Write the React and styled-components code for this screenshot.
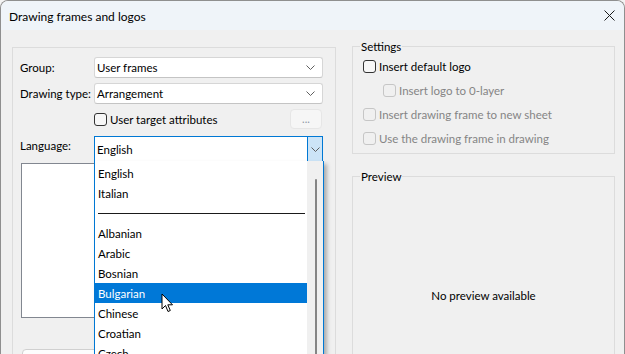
import React from "react";
import styled, { createGlobalStyle } from "styled-components";

const GlobalStyle = createGlobalStyle`
  html, body { margin: 0; padding: 0; width: 625px; height: 354px; overflow: hidden; background: #f3f3f3; }
  body { font-family: Lato, "Noto Sans", sans-serif; font-size: 11.5px; color: #000; white-space: nowrap; }
  * { box-sizing: border-box; }
`;

const Window = styled.div`
  position: relative;
  width: 625px;
  height: 354px;
  border: 1px solid #8f8f8f;
  border-bottom: none;
  border-radius: 8px 8px 0 0;
  overflow: hidden;
  background: #f0f0f0;
  display: flex;
  flex-direction: column;
`;

const TitleBar = styled.div`
  height: 29px;
  flex: none;
  background: #eff4f9;
  display: flex;
  align-items: center;
  justify-content: space-between;
  padding-left: 8px;
`;

const Title = styled.span`
  font-size: 12px;
  line-height: 15px;
  margin-top: 2px;
`;

const CloseButton = styled.div`
  width: 30px;
  height: 29px;
  display: flex;
  align-items: center;
  justify-content: center;
`;

const Body = styled.div`
  flex: 1;
  display: flex;
  align-items: flex-start;
  gap: 16px;
  padding: 9px 8px 0 11px;
`;

const LeftGroup = styled.div`
  position: relative;
  width: 324px;
  height: 340px;
  margin-top: 8px;
  border: 1px solid #dcdcdc;
  padding: 9px 12px 0 7px;
  display: flex;
  flex-direction: column;
`;

const Row = styled.div`
  display: flex;
  align-items: ${(p) => (p.$top ? "flex-start" : "center")};
  margin-top: ${(p) => p.$mt || 0}px;
`;

const Label = styled.div`
  width: 74px;
  flex: none;
  line-height: 15px;
  padding-top: ${(p) => (p.$top ? 3 : 0)}px;
  margin-top: -1px;
`;

const Combo = styled.div`
  position: relative;
  flex: 1;
  height: ${(p) => (p.$focused ? 27 : 21)}px;
  background: #fff;
  border: 1px solid ${(p) => (p.$focused ? "#0078d4" : "#d6d6d6")};
  border-bottom: ${(p) => (p.$focused ? "2px solid #0078d4" : "1px solid #c4c4c4")};
  border-radius: ${(p) => (p.$focused ? "0" : "3px")};
  display: flex;
  align-items: center;
  padding-left: 2px;
`;

const ComboText = styled.span`
  flex: 1;
  line-height: 15px;
  padding-top: ${(p) => (p.$focused ? 1 : 0)}px;
`;

const Arrow = styled.div`
  width: ${(p) => (p.$focused ? 16 : 19)}px;
  align-self: stretch;
  display: flex;
  align-items: center;
  justify-content: center;
  margin-right: ${(p) => (p.$focused ? -1 : 0)}px;
  margin-top: ${(p) => (p.$focused ? -1 : 0)}px;
  margin-bottom: ${(p) => (p.$focused ? -2 : 0)}px;
  background: ${(p) => (p.$focused ? "#cce4f7" : "transparent")};
  border: ${(p) => (p.$focused ? "1px solid #0078d4" : "none")};
  padding-right: ${(p) => (p.$focused ? 0 : 5)}px;
  flex: none;
`;

const Chevron = () => (
  <svg width="9" height="5" viewBox="0 0 9 5">
    <polyline points="0.5,0.5 4.5,4.5 8.5,0.5" fill="none" stroke="#5f5f5f" strokeWidth="1" />
  </svg>
);

const CheckRow = styled.label`
  display: flex;
  align-items: center;
  gap: 3px;
  height: ${(p) => p.$h || 24}px;
  padding-left: ${(p) => p.$indent || 0}px;
  color: ${(p) => (p.$disabled ? "#858585" : "#000")};
  line-height: 15px;
`;

const Box = styled.span`
  width: 13px;
  height: 13px;
  flex: none;
  border: 1px solid ${(p) => (p.$disabled ? "#c6c6c6" : "#333")};
  border-radius: 3px;
  background: ${(p) => (p.$disabled ? "#f0f0f0" : "#f7f7f7")};
  margin-top: 1px;
`;

const DotsButton = styled.div`
  margin-left: auto;
  margin-right: 1px;
  width: 32px;
  height: 20px;
  border: 1px solid #e6e6e6;
  border-radius: 4px;
  background: #f6f6f6;
  color: #8d97a6;
  display: flex;
  align-items: center;
  justify-content: center;
  font-size: 11px;
  padding-bottom: 2px;
`;

const ListBox = styled.div`
  height: 155px;
  margin-left: 1px;
  background: #fff;
  border: 1px solid #828790;
`;

const BottomButton = styled.div`
  width: 110px;
  height: 24px;
  margin-top: 31px;
  margin-left: 2px;
  border: 1px solid #d0d0d0;
  border-radius: 4px;
  background: #fdfdfd;
`;

const DropList = styled.div`
  position: absolute;
  top: 100%;
  left: -1px;
  width: 230px;
  height: 220px;
  background: #fff;
  border: 1px solid #0078d4;
  border-top: none;
  box-shadow: 3px 3px 4px rgba(0, 0, 0, 0.28);
  z-index: 5;
  display: flex;
  padding-top: 2px;
`;

const Items = styled.div`
  flex: 1;
  display: flex;
  flex-direction: column;
`;

const Item = styled.div`
  height: 20px;
  flex: none;
  display: flex;
  align-items: center;
  padding-left: 3px;
  line-height: 15px;
  background: ${(p) => (p.$selected ? "#0078d7" : "transparent")};
  color: ${(p) => (p.$selected ? "#fff" : "#000")};
`;

const Separator = styled.div`
  height: 20px;
  flex: none;
  display: flex;
  align-items: center;
  padding: 0 2px 0 3px;
  &::after {
    content: "";
    flex: 1;
    height: 1px;
    background: #1a1a1a;
  }
`;

const ScrollTrack = styled.div`
  position: relative;
  width: 16px;
  flex: none;
  background: #f0f0f0;
  margin-top: -2px;
`;

const Thumb = styled.div`
  position: absolute;
  left: 8px;
  top: 18px;
  width: 2px;
  bottom: 0;
  border-radius: 1px;
  background: #858585;
`;

const RightCol = styled.div`
  width: 263px;
  display: flex;
  flex-direction: column;
`;

const Fieldset = styled.fieldset`
  margin: 0;
  margin-top: ${(p) => p.$mt || 0}px;
  padding: 0;
  min-width: 0;
  border: 1px solid #dcdcdc;
`;

const Legend = styled.legend`
  margin-left: 7px;
  padding: 0 1px;
  line-height: 15px;
`;

const SettingsBody = styled.div`
  padding: 0 10px 3px 10px;
`;

const PreviewBody = styled.div`
  height: 222px;
  display: flex;
  align-items: center;
  justify-content: center;
`;

const Cursor = styled.svg`
  position: absolute;
  left: 160px;
  top: 292px;
  z-index: 10;
`;

const languages = ["Albanian", "Arabic", "Bosnian", "Bulgarian", "Chinese", "Croatian", "Czech"];

export default function App() {
  return (
    <>
      <GlobalStyle />
      <Window>
        <TitleBar>
          <Title>Drawing frames and logos</Title>
          <CloseButton>
            <svg width="11" height="11" viewBox="0 0 11 11">
              <path d="M0.5 0.5 L10.5 10.5 M10.5 0.5 L0.5 10.5" stroke="#1a1a1a" strokeWidth="1" />
            </svg>
          </CloseButton>
        </TitleBar>
        <Body>
          <LeftGroup>
            <Row>
              <Label>Group:</Label>
              <Combo>
                <ComboText>User frames</ComboText>
                <Arrow><Chevron /></Arrow>
              </Combo>
            </Row>
            <Row $mt={5}>
              <Label>Drawing type:</Label>
              <Combo>
                <ComboText>Arrangement</ComboText>
                <Arrow><Chevron /></Arrow>
              </Combo>
            </Row>
            <Row $mt={5}>
              <Label />
              <CheckRow $h={20}>
                <Box />
                User target attributes
              </CheckRow>
              <DotsButton>...</DotsButton>
            </Row>
            <Row $mt={7} $top>
              <Label $top>Language:</Label>
              <Combo $focused>
                <ComboText $focused>English</ComboText>
                <Arrow $focused><Chevron /></Arrow>
                <DropList>
                  <Items>
                    <Item>English</Item>
                    <Item>Italian</Item>
                    <Separator />
                    {languages.map((l) => (
                      <Item key={l} $selected={l === "Bulgarian"}>{l}</Item>
                    ))}
                  </Items>
                  <ScrollTrack>
                    <Thumb />
                  </ScrollTrack>
                </DropList>
              </Combo>
            </Row>
            <ListBox />
            <BottomButton />
          </LeftGroup>
          <RightCol>
            <Fieldset>
              <Legend>Settings</Legend>
              <SettingsBody>
                <CheckRow><Box />Insert default logo</CheckRow>
                <CheckRow $indent={20} $disabled><Box $disabled />Insert logo to 0-layer</CheckRow>
                <CheckRow $disabled><Box $disabled />Insert drawing frame to new sheet</CheckRow>
                <CheckRow $disabled><Box $disabled />Use the drawing frame in drawing</CheckRow>
              </SettingsBody>
            </Fieldset>
            <Fieldset $mt={15}>
              <Legend>Preview</Legend>
              <PreviewBody>No preview available</PreviewBody>
            </Fieldset>
          </RightCol>
        </Body>
        <Cursor width="13" height="21" viewBox="0 0 13 21">
          <path d="M1 1 L1 16 L4.5 12.5 L7 18.5 L9.3 17.5 L6.8 11.8 L11.5 11.8 Z" fill="#fff" stroke="#000" strokeWidth="1" strokeLinejoin="miter" />
        </Cursor>
      </Window>
    </>
  );
}
